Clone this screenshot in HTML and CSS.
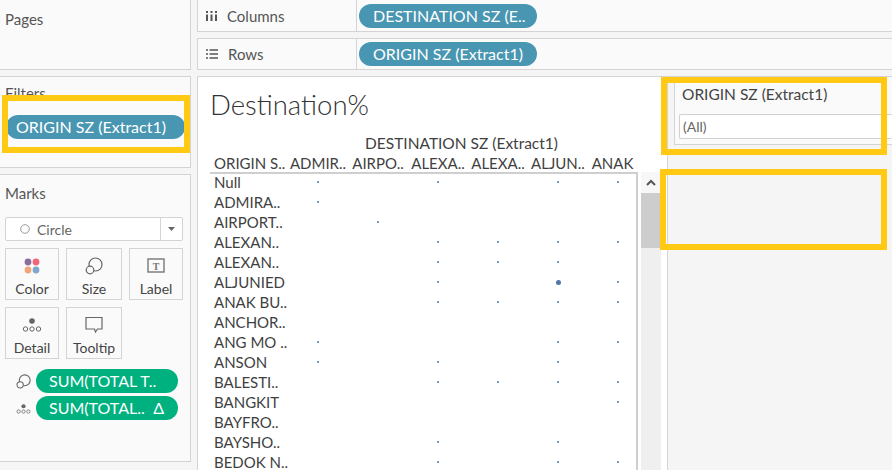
FILE: index.html
```html
<!DOCTYPE html>
<html lang="en">
<head>
  <meta charset="UTF-8">
  <title>Destination%</title>
  <link rel="stylesheet" href="styles.css">
</head>
<body>
  <div class="workspace">
    <div class="side">
      <div class="card pages"><div class="card-title">Pages</div></div>
      <div class="card filters">
        <div class="card-title">Filters</div>
        <div class="pill pill-blue filter-pill">ORIGIN SZ (Extract1)</div>
      </div>
      <div class="card marks">
        <div class="card-title">Marks</div>
        <div class="mark-select">
          <svg class="circle-icon" width="10" height="10" viewBox="0 0 10 10"><circle cx="5" cy="5" r="4.300" fill="none" stroke="#999" stroke-width="1"/></svg>
          <span class="mark-type">Circle</span>
          <span class="mark-caret"><svg width="7" height="4" viewBox="0 0 7 4"><path d="M0 0h7L3.500 4z" fill="#666"/></svg></span>
        </div>
        <div class="mark-buttons">
          <div class="mark-btn">
            <svg width="16" height="16" viewBox="0 0 18 18"><circle cx="4.500" cy="4.500" r="3.800" fill="#8a6d9c"/><circle cx="13.500" cy="4.500" r="3.800" fill="#f2667c"/><circle cx="4.500" cy="13.500" r="3.800" fill="#f0a676"/><circle cx="13.500" cy="13.500" r="3.800" fill="#7fa6d1"/></svg>
            <span>Color</span>
          </div>
          <div class="mark-btn">
            <svg width="18" height="18" viewBox="0 0 18 18"><circle cx="10.500" cy="7.500" r="6.500" fill="none" stroke="#666" stroke-width="1.200"/><circle cx="5" cy="13" r="3.800" fill="#fafafa" stroke="#666" stroke-width="1.200"/></svg>
            <span>Size</span>
          </div>
          <div class="mark-btn">
            <svg width="18" height="16" viewBox="0 0 18 16"><rect x="1" y="1" width="16" height="13" fill="none" stroke="#777" stroke-width="1.400"/><text x="9" y="11.500" text-anchor="middle" class="t-glyph">T</text></svg>
            <span>Label</span>
          </div>
          <div class="mark-btn">
            <svg width="20" height="18" viewBox="0 0 20 18"><circle cx="10" cy="5" r="2.800" fill="#666"/><circle cx="3.500" cy="13" r="2.200" fill="none" stroke="#666"/><circle cx="10" cy="13" r="2.200" fill="none" stroke="#666"/><circle cx="16.500" cy="13" r="2.200" fill="none" stroke="#666"/></svg>
            <span>Detail</span>
          </div>
          <div class="mark-btn">
            <svg width="18" height="18" viewBox="0 0 18 18"><path d="M1 1.500h16v11.500h-4.500l-2 3-1-3H1z" fill="none" stroke="#666" stroke-width="1.200"/></svg>
            <span>Tooltip</span>
          </div>
        </div>
        <div class="shelf-row">
          <svg width="15" height="15" viewBox="0 0 18 18"><circle cx="10.500" cy="7.500" r="6.500" fill="none" stroke="#666" stroke-width="1.300"/><circle cx="5" cy="13" r="3.800" fill="#fafafa" stroke="#666" stroke-width="1.300"/></svg>
          <div class="pill pill-green">SUM(TOTAL T..</div>
        </div>
        <div class="shelf-row">
          <svg width="15" height="15" viewBox="0 0 20 18"><circle cx="10" cy="6" r="2.800" fill="#666"/><circle cx="3.500" cy="13" r="2.200" fill="none" stroke="#666"/><circle cx="10" cy="13" r="2.200" fill="none" stroke="#666"/><circle cx="16.500" cy="13" r="2.200" fill="none" stroke="#666"/></svg>
          <div class="pill pill-green pill-split"><span>SUM(TOTAL..</span><span>Δ</span></div>
        </div>
      </div>
    </div>

    <div class="center">
      <div class="card shelf">
        <div class="shelf-name">
          <svg width="11" height="10" viewBox="0 0 11 10"><path d="M1 0v2M1 3.500V10M5.500 0v2M5.500 3.500V10M10 0v2M10 3.500V10" stroke="#555" stroke-width="2" fill="none"/></svg>
          <span>Columns</span>
        </div>
        <div class="pill pill-blue shelf-pill">DESTINATION SZ (E..</div>
      </div>
      <div class="card shelf">
        <div class="shelf-name">
          <svg width="12" height="10" viewBox="0 0 12 10"><path d="M0 1h2M3.500 1H12M0 5h2M3.500 5H12M0 9h2M3.500 9H12" stroke="#555" stroke-width="1.600" fill="none"/></svg>
          <span>Rows</span>
        </div>
        <div class="pill pill-blue shelf-pill">ORIGIN SZ (Extract1)</div>
      </div>

      <div class="main">
        <div class="sheet">
          <h1 class="sheet-title">Destination%</h1>
          <div class="col-caption">DESTINATION SZ (Extract1)</div>
          <div class="view">
            <div class="table-wrap">
              <div class="head-row">
                <div class="row-label">ORIGIN S..</div>
                <div class="col-head">ADMIR..</div>
                <div class="col-head">AIRPO..</div>
                <div class="col-head">ALEXA..</div>
                <div class="col-head">ALEXA..</div>
                <div class="col-head">ALJUN..</div>
                <div class="col-head">ANAK ..</div>
              </div>
              <div class="table-body" id="tableBody"></div>
            </div>
            <div class="scrollbar">
              <div class="scroll-up"><svg width="10" height="7" viewBox="0 0 10 7"><path d="M1 6l4-4 4 4" fill="none" stroke="#555" stroke-width="2"/></svg></div>
              <div class="scroll-thumb"></div>
            </div>
          </div>
        </div>
        <div class="legend-col">
          <div class="quick-filter">
            <div class="qf-title">ORIGIN SZ (Extract1)</div>
            <div class="qf-input">(All)</div>
          </div>
        </div>
      </div>
    </div>
  </div>

  <div class="highlight hl-filters"></div>
  <div class="highlight hl-quick"></div>
  <div class="highlight hl-empty"></div>

  <script>
    // columns that have a mark, by position: 0 = ADMIR.. to 5 = ANAK ..
    const rows = [
      ["Null", [0, 2, 4, 5]],
      ["ADMIRA..", [0]],
      ["AIRPORT..", [1]],
      ["ALEXAN..", [2, 3, 4, 5]],
      ["ALEXAN..", [2, 3, 4]],
      ["ALJUNIED", [2, 5], 4],
      ["ANAK BU..", [2, 3, 4, 5]],
      ["ANCHOR..", []],
      ["ANG MO ..", [0, 4, 5]],
      ["ANSON", [0, 2, 4]],
      ["BALESTI..", [2, 3, 4, 5]],
      ["BANGKIT", [5]],
      ["BAYFRO..", []],
      ["BAYSHO..", [2, 4]],
      ["BEDOK N..", [2, 4, 5]]
    ];

    const body = document.getElementById("tableBody");
    rows.forEach(function (r) {
      const row = document.createElement("div");
      row.className = "body-row";
      const label = document.createElement("div");
      label.className = "row-label";
      label.textContent = r[0];
      row.appendChild(label);
      for (let i = 0; i < 6; i++) {
        const cell = document.createElement("div");
        cell.className = "cell";
        if (r[2] === i) {
          cell.innerHTML = '<span class="dot dot-big"></span>';
        } else if (r[1].includes(i)) {
          cell.innerHTML = '<span class="dot"></span>';
        }
        row.appendChild(cell);
      }
      body.appendChild(row);
    });
  </script>
</body>
</html>
```

FILE: styles.css
```css
html, body { margin: 0; height: 470px; overflow: hidden; }
body { font-family: Lato, "Liberation Sans", sans-serif; font-size: 15px; color: #444; background: #f5f5f5; }
* { box-sizing: border-box; }

.workspace { display: flex; gap: 6px; height: 470px; }
.side { width: 191px; display: flex; flex-direction: column; gap: 6px; flex-shrink: 0; }
.center { flex: 1; display: flex; flex-direction: column; gap: 6px; min-width: 0; }

.card { background: #fafafa; border: 1px solid #d4d4d4; border-left: none; }
.card-title { padding: 9px 0 0 5px; line-height: 20px; color: #555; }
.pages { height: 70px; border-top: none; }
.filters { height: 92px; }
.filters .card-title { padding-top: 6px; }
.marks { height: 288px; padding: 0 5px; }
.marks .card-title { padding: 8px 0 0; }

.pill { border-radius: 12px; height: 24px; line-height: 24px; color: #fff; font-size: 16px; white-space: nowrap; }
.pill-blue { background: #4996b2; }
.pill-green { background: #00b180; width: 142px; padding-left: 13px; }
.pill-split { display: flex; justify-content: space-between; padding-right: 14px; }

.filter-pill { margin: 12px 0 0 6px; width: 179px; padding-left: 10px; }

.mark-select { display: flex; align-items: center; height: 24px; width: 178px; margin-top: 14px; background: #fff; border: 1px solid #d4d4d4; border-radius: 2px; color: #666; font-size: 14px; padding-left: 14px; }
.mark-type { margin-left: 7px; flex: 1; }
.mark-caret { width: 22px; height: 22px; border-left: 1px solid #d4d4d4; display: flex; align-items: center; justify-content: center; }

.mark-buttons { display: grid; grid-template-columns: 54px 56px 54px; column-gap: 7px; row-gap: 7px; margin-top: 7px; }
.mark-btn { height: 52px; border: 1px solid #d4d4d4; display: flex; flex-direction: column; align-items: center; padding-top: 8px; font-size: 14px; color: #444; background: #fafafa; }
.mark-btn svg { height: 18px; }
.mark-btn span { margin-top: 5px; line-height: 18px; }
.t-glyph { font-family: "Liberation Serif", serif; font-size: 10px; font-weight: bold; fill: #777; }

.shelf-row { display: flex; align-items: center; gap: 5px; margin: 3px 0 0 11px; }
.mark-buttons + .shelf-row { margin-top: 10px; }
.shelf-row svg { flex-shrink: 0; }

.shelf { height: 32px; display: flex; align-items: center; border-left: 1px solid #d4d4d4; border-right: none; }
.shelf:first-child { border-top: none; }
.shelf-name { width: 159px; height: 100%; display: flex; align-items: center; gap: 10px; padding-left: 8px; border-right: 1px solid #d4d4d4; color: #555; }
.shelf-pill { width: 178px; margin-left: 2px; padding-left: 14px; }

.main { flex: 1; display: flex; min-height: 0; border: 1px solid #d4d4d4; border-right: none; border-bottom: none; background: #fff; }
.sheet { width: 469px; background: #fff; padding-top: 10px; overflow: hidden; }
.sheet-title { margin: 0 0 0 12px; font-size: 27.500px; font-weight: 300; line-height: 36px; color: #333; }
.col-caption { margin-top: 10px; margin-bottom: 1px; padding-left: 167px; line-height: 20px; font-size: 15.500px; color: #3f3f3f; }

.view { display: flex; padding-left: 12px; font-size: 15px; }
.table-wrap { width: 428px; overflow: hidden; }
.head-row { display: flex; height: 18px; line-height: 18px; color: #3f3f3f; }
.col-head { width: 60px; flex-shrink: 0; text-align: center; white-space: nowrap; }
.table-body { border-top: 2px solid #cfcfcf; border-right: 2px solid #cfcfcf; height: 300px; }
.body-row { display: flex; height: 20px; line-height: 20px; color: #3f3f3f; }
.body-row:first-child { margin-top: -2px; }
.row-label { width: 78px; flex-shrink: 0; padding-left: 4px; white-space: nowrap; }
.cell { width: 60px; flex-shrink: 0; display: flex; align-items: center; justify-content: center; }
.dot { width: 2px; height: 2px; background: #7a9cc0; }
.dot-big { width: 5px; height: 5px; border-radius: 50%; background: #4e79a7; }

.scrollbar { width: 20px; margin: 18px 0 0 3px; background: #efefef; }
.scroll-up { height: 21px; display: flex; align-items: center; justify-content: center; background: #f7f7f7; }
.scroll-thumb { height: 55px; background: #cdcdcd; }

.legend-col { flex: 1; background: #f5f5f5; border-left: 1px solid #d4d4d4; }
.quick-filter { height: 68px; background: #fafafa; border-left: 1px solid #d4d4d4; border-bottom: 1px solid #d4d4d4; padding: 6px 0 0 4px; margin-left: 6px; }
.qf-title { line-height: 22px; font-size: 15.500px; color: #444; padding-left: 3px; }
.qf-input { height: 25px; margin-top: 9px; background: #fff; border: 1px solid #d0d0d0; border-right: none; border-radius: 2px; padding-left: 3px; line-height: 23px; font-size: 14px; color: #666; }

.highlight { position: absolute; border: 6px solid #ffc914; }
.hl-filters { left: 2px; top: 95px; width: 188px; height: 58px; }
.hl-quick { left: 661px; top: 77px; width: 226px; height: 78px; }
.hl-empty { left: 660px; top: 169px; width: 227px; height: 81px; }
```
